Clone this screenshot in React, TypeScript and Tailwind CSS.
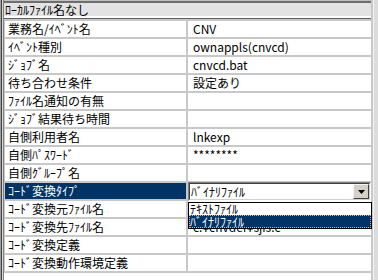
const ROWS: [string, string][] = [
  ['業務名/ｲﾍﾞﾝﾄ名', 'CNV'],
  ['ｲﾍﾞﾝﾄ種別', 'ownappls(cnvcd)'],
  ['ｼﾞｮﾌﾞ名', 'cnvcd.bat'],
  ['待ち合わせ条件', '設定あり'],
  ['ﾌｧｲﾙ名通知の有無', ''],
  ['ｼﾞｮﾌﾞ結果待ち時間', ''],
  ['自側利用者名', 'lnkexp'],
  ['自側ﾊﾟｽﾜｰﾄﾞ', '********'],
  ['自側ｸﾞﾙｰﾌﾟ名', ''],
  ['ｺｰﾄﾞ変換ﾀｲﾌﾟ', 'ﾊﾞｲﾅﾘﾌｧｲﾙ'],
  ['ｺｰﾄﾞ変換元ﾌｧｲﾙ名', ''],
  ['ｺｰﾄﾞ変換先ﾌｧｲﾙ名', 'c:¥cnvdef¥sjis.c'],
  ['ｺｰﾄﾞ変換定義', ''],
  ['ｺｰﾄﾞ変換動作環境定義', ''],
]

const SELECTED = 9

// in-place combo editor with its open list
function Combo({ value }: { value: string }) {
  return (
    <div className="absolute -top-px left-0 right-0 z-10 h-[19px]">
      <div className="h-full border-t border-l border-b border-r border-t-[#808080] border-l-[#808080] border-b-white border-r-white">
        <div className="flex h-full items-center border-t border-l border-b border-r border-t-[#404040] border-l-[#404040] border-b-[#d4d0c8] border-r-[#d4d0c8] bg-white">
          <span className="flex-1 whitespace-nowrap pl-px leading-[15px]">{value}</span>
          <div className="flex h-full w-[16px] items-center justify-center border-t border-l border-b border-r border-t-[#f4f4f4] border-l-[#f4f4f4] border-b-[#404040] border-r-[#404040] bg-[#d4d0c8]">
            <svg width="7" height="4" viewBox="0 0 7 4" aria-hidden="true">
              <polygon points="0,0 7,0 3.5,4" fill="#000" />
            </svg>
          </div>
        </div>
      </div>
      <div className="absolute top-[20px] left-0 right-[-1px] flex h-[27px] flex-col border border-black bg-white">
        <div className="h-[12px] whitespace-nowrap pl-px leading-[12px]">ﾃｷｽﾄﾌｧｲﾙ</div>
        <div className="h-[13px] whitespace-nowrap border border-dotted border-[#f8b058] bg-[#003366] leading-[11px] text-white">
          ﾊﾞｲﾅﾘﾌｧｲﾙ
        </div>
      </div>
    </div>
  )
}

export default function App() {
  return (
    <div className="flex h-[280px] w-[378px] overflow-hidden bg-white font-['Noto_Sans_CJK_JP',sans-serif] text-[12px] text-black">
      <div className="flex shrink-0">
        <div className="w-px bg-[#a0a0a0]" />
        <div className="w-px bg-[#404040]" />
        <div className="w-px bg-[#d8d8d8]" />
        <div className="w-px bg-[#808080]" />
      </div>

      <div className="flex w-[367px] shrink-0 flex-col">
        <div className="h-px bg-[#c0c0c0]" />
        <div className="h-[2px] bg-[#6e6e6e]" />
        <div className="h-[13px] whitespace-nowrap bg-[#e3e3e3] pl-px leading-[13px]">ﾛｰｶﾙﾌｧｲﾙ名なし</div>
        <div className="h-[2px] bg-white" />
        <div className="h-px bg-[#606060]" />
        <div className="flex flex-col gap-[2px] bg-[#c8c8c8] py-[2px] pl-px">
          {ROWS.map(([label, value], i) => (
            <div key={label} className="flex h-4 gap-[2px]">
              <div
                className={`w-[181px] whitespace-nowrap pl-[3px] leading-4 ${
                  i === SELECTED ? 'bg-[#003366] text-white' : 'bg-white'
                }`}
              >
                {label}
              </div>
              <div className="relative flex-1 whitespace-nowrap bg-white pl-[5px] leading-4">
                {i === SELECTED ? <Combo value={value} /> : value}
              </div>
            </div>
          ))}
        </div>
      </div>

      <div className="flex shrink-0">
        <div className="w-[2px] bg-[#c8c8c8]" />
        <div className="w-px bg-[#f4f4f4]" />
        <div className="w-[4px] bg-[#dcdcdc]" />
      </div>
    </div>
  )
}
